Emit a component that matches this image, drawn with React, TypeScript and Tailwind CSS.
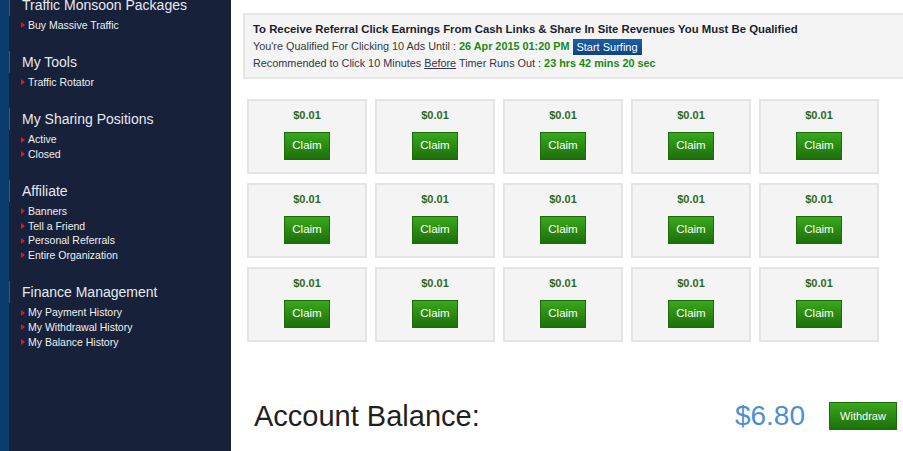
const sections = [
  { title: 'Traffic Monsoon Packages', links: ['Buy Massive Traffic'] },
  { title: 'My Tools', links: ['Traffic Rotator'] },
  { title: 'My Sharing Positions', links: ['Active', 'Closed'] },
  { title: 'Affiliate', links: ['Banners', 'Tell a Friend', 'Personal Referrals', 'Entire Organization'] },
  { title: 'Finance Management', links: ['My Payment History', 'My Withdrawal History', 'My Balance History'] },
];

const ads = Array.from({ length: 15 }, (_, i) => i);

function Sidebar() {
  return (
    <aside className="flex w-[231px] shrink-0">
      <div className="w-[9px] bg-[#0b3b6b]" />
      <div className="flex-1 bg-[#172139]">
        <div className="-mt-[6px]">
          {sections.map((s) => (
            <div key={s.title} className="mb-[18.4px]">
              <h3 className="h-[22px] border-l border-[#c8202a] pl-[12px] text-[14px] leading-[22px] text-[#e6e9ef]">
                {s.title}
              </h3>
              <ul className="mt-[2px] pl-[12px]">
                {s.links.map((l) => (
                  <li key={l} className="flex items-center gap-[3px] text-[10.5px] leading-[14.7px] text-[#eef0f3]">
                    <span className="h-0 w-0 border-y-[3px] border-l-[4px] border-y-transparent border-l-[#e3141b]" />
                    <a href="#">{l}</a>
                  </li>
                ))}
              </ul>
            </div>
          ))}
        </div>
      </div>
    </aside>
  );
}

function AdCard() {
  return (
    <div className="flex h-[75px] flex-col items-center border-2 border-[#e4e4e4] bg-[#f4f4f4]">
      <div className="mt-[7px] text-[11px] font-bold leading-[14px] text-[#2f6a14]">$0.01</div>
      <button className="mt-[10px] h-[28px] w-[46px] border border-[#1d6a0b] bg-gradient-to-b from-[#38a91c] to-[#1e6f0b] text-[11.5px] text-white">
        Claim
      </button>
    </div>
  );
}

export default function App() {
  return (
    <div className="flex h-[451px] w-full overflow-hidden bg-white font-['Liberation_Sans',Arial,sans-serif]">
      <Sidebar />
      <main className="min-w-0 flex-1">
        <div className="mt-[13px] ml-[12px] -mr-[20px] border-2 border-[#e6e6e6] bg-[#f4f4f4] pt-[6px] pb-[5px] pl-[8px] text-[10.85px] leading-[17px]">
          <div className="text-[11.35px] font-bold text-[#1b1d2e]">
            To Receive Referral Click Earnings From Cash Links &amp; Share In Site Revenues You Must Be Qualified
          </div>
          <div className="flex items-center text-[#3b3a36]">
            <span>You're Qualified For Clicking 10 Ads Until :&nbsp;</span>
            <span className="font-bold text-[#1a8a14]">26 Apr 2015 01:20 PM</span>
            <button className="ml-[3px] h-[16px] w-[69px] bg-gradient-to-b from-[#1d5fa6] to-[#0d4482] text-[11px] leading-[16px] text-white">
              Start Surfing
            </button>
          </div>
          <div className="text-[#333447]">
            Recommended to Click 10 Minutes <span className="underline">Before</span> Timer Runs Out :{' '}
            <span className="font-bold text-[#1a8a14]">23 hrs 42 mins 20 sec</span>
          </div>
        </div>

        <div className="mt-[20px] ml-[16px] grid w-[632px] grid-cols-5 gap-x-[8px] gap-y-[9px]">
          {ads.map((i) => (
            <AdCard key={i} />
          ))}
        </div>

        <div className="mt-[60px] flex items-center justify-between pl-[23px] pr-[6px]">
          <span className="text-[29px] leading-[28px] text-[#1f1f1f]">Account Balance:</span>
          <div className="flex items-center gap-[24px]">
            <span className="text-[28px] leading-[28px] text-[#4a8fd6]">$6.80</span>
            <button className="h-[28px] w-[68px] border border-[#1d6a0b] bg-gradient-to-b from-[#38a91c] to-[#1e6f0b] text-[11px] text-white">
              Withdraw
            </button>
          </div>
        </div>
      </main>
    </div>
  );
}
